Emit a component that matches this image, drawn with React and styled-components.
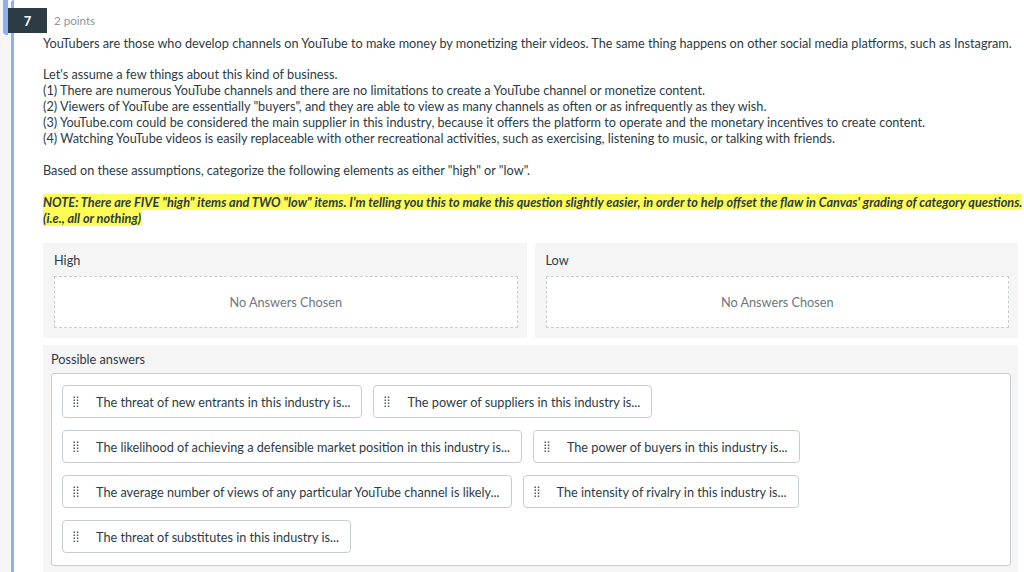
import React from 'react';
import styled, { createGlobalStyle } from 'styled-components';

const GlobalStyle = createGlobalStyle`
  html, body {
    margin: 0;
    padding: 0;
    background: #fff;
  }
  body {
    font-family: Lato, "Open Sans", "Liberation Sans", sans-serif;
    color: #2d3b45;
    overflow: hidden;
  }
`;

const Page = styled.div`
  display: flex;
  height: 572px;
  overflow: hidden;
`;

const Gutter = styled.div`
  width: 11px;
  flex: none;
  background: #f5f5f5;
`;

const Question = styled.div`
  position: relative;
  flex: 1;
  min-width: 0;
  border-left: 3px solid #8db0ee;
  border-top-left-radius: 3px;
  padding: 13px 6px 0 29px;
`;

const Badge = styled.div`
  position: absolute;
  left: -6px;
  top: 8px;
  width: 39px;
  height: 25px;
  background: #2d3b45;
  color: #fff;
  font-size: 13px;
  font-weight: 700;
  display: flex;
  align-items: center;
  justify-content: center;
  &::before {
    content: '';
    position: absolute;
    left: -5px;
    top: -8px;
    width: 5px;
    height: 35px;
    background: #8db0ee;
    border-bottom-left-radius: 4px;
  }
`;

const Points = styled.div`
  font-size: 11.6px;
  line-height: 16px;
  color: #8b969e;
  padding-left: 11px;
  margin-bottom: 6px;
`;

const Text = styled.p`
  margin: 0 0 ${(p) => p.gap ?? 16}px;
  font-size: 12.7px;
  line-height: 16px;
  white-space: nowrap;
`;

const Note = styled.span`
  background: #fefc54;
  font-weight: 700;
  font-style: italic;
`;

const Categories = styled.div`
  display: grid;
  grid-template-columns: 1fr 1fr;
  gap: 8px;
  margin-top: 17px;
`;

const Panel = styled.div`
  background: #f5f5f5;
  padding: 8px 9px 10px 11px;
`;

const PanelLabel = styled.div`
  font-size: 12.7px;
  line-height: 18px;
  margin-bottom: 7px;
`;

const DropZone = styled.div`
  height: 50px;
  border: 1px dashed #c7cdd1;
  background: #fff;
  display: flex;
  align-items: center;
  justify-content: center;
  font-size: 12.7px;
  color: #6b7780;
`;

const AnswersPanel = styled.div`
  background: #f5f5f5;
  margin-top: 7px;
  padding: 6px 7px 8px 8px;
`;

const AnswersLabel = styled.div`
  font-size: 12.7px;
  line-height: 16px;
  margin-bottom: 6px;
`;

const AnswerBox = styled.div`
  background: #fff;
  border: 1px solid #c7cdd1;
  border-radius: 3px;
  padding: 11px 10px 12px 10px;
  display: flex;
  flex-wrap: wrap;
  gap: 12px 11px;
`;

const Item = styled.div`
  display: flex;
  align-items: center;
  height: 31px;
  padding: 0 11px 0 10px;
  border: 1px solid #c7cdd1;
  border-radius: 4px;
  background: #fff;
  font-size: 12.7px;
  white-space: nowrap;
`;

const Handle = styled.svg`
  width: 6px;
  height: 12px;
  margin-right: 17px;
  flex: none;
`;

const DragHandle = () => (
  <Handle viewBox="0 0 6 12">
    {[0, 3, 6, 9].map((y) => (
      <g key={y} fill="#4f5b63">
        <rect x="0.5" y={y + 0.5} width="1.5" height="1.5" />
        <rect x="3.8" y={y + 0.5} width="1.5" height="1.5" />
      </g>
    ))}
  </Handle>
);

const answers = [
  'The threat of new entrants in this industry is...',
  'The power of suppliers in this industry is...',
  'The likelihood of achieving a defensible market position in this industry is...',
  'The power of buyers in this industry is...',
  'The average number of views of any particular YouTube channel is likely...',
  'The intensity of rivalry in this industry is...',
  'The threat of substitutes in this industry is...',
];

export default function App() {
  return (
    <Page>
      <GlobalStyle />
      <Gutter />
      <Question>
        <Badge>7</Badge>
        <Points>2 points</Points>
        <Text gap={15}>
          YouTubers are those who develop channels on YouTube to make money by monetizing their videos. The same thing happens on other social media platforms, such as Instagram.
        </Text>
        <Text>
          Let's assume a few things about this kind of business.<br />
          (1) There are numerous YouTube channels and there are no limitations to create a YouTube channel or monetize content.<br />
          (2) Viewers of YouTube are essentially "buyers", and they are able to view as many channels as often or as infrequently as they wish.<br />
          (3) YouTube.com could be considered the main supplier in this industry, because it offers the platform to operate and the monetary incentives to create content.<br />
          (4) Watching YouTube videos is easily replaceable with other recreational activities, such as exercising, listening to music, or talking with friends.
        </Text>
        <Text>
          Based on these assumptions, categorize the following elements as either "high" or "low".
        </Text>
        <Text gap={0}>
          <Note>
            NOTE: There are FIVE "high" items and TWO "low" items. I'm telling you this to make this question slightly easier, in order to help offset the flaw in Canvas' grading of category questions.
          </Note>
          <br />
          <Note>(i.e., all or nothing)</Note>
        </Text>
        <Categories>
          <Panel>
            <PanelLabel>High</PanelLabel>
            <DropZone>No Answers Chosen</DropZone>
          </Panel>
          <Panel>
            <PanelLabel>Low</PanelLabel>
            <DropZone>No Answers Chosen</DropZone>
          </Panel>
        </Categories>
        <AnswersPanel>
          <AnswersLabel>Possible answers</AnswersLabel>
          <AnswerBox>
            {answers.map((a) => (
              <Item key={a}>
                <DragHandle />
                {a}
              </Item>
            ))}
          </AnswerBox>
        </AnswersPanel>
      </Question>
    </Page>
  );
}
